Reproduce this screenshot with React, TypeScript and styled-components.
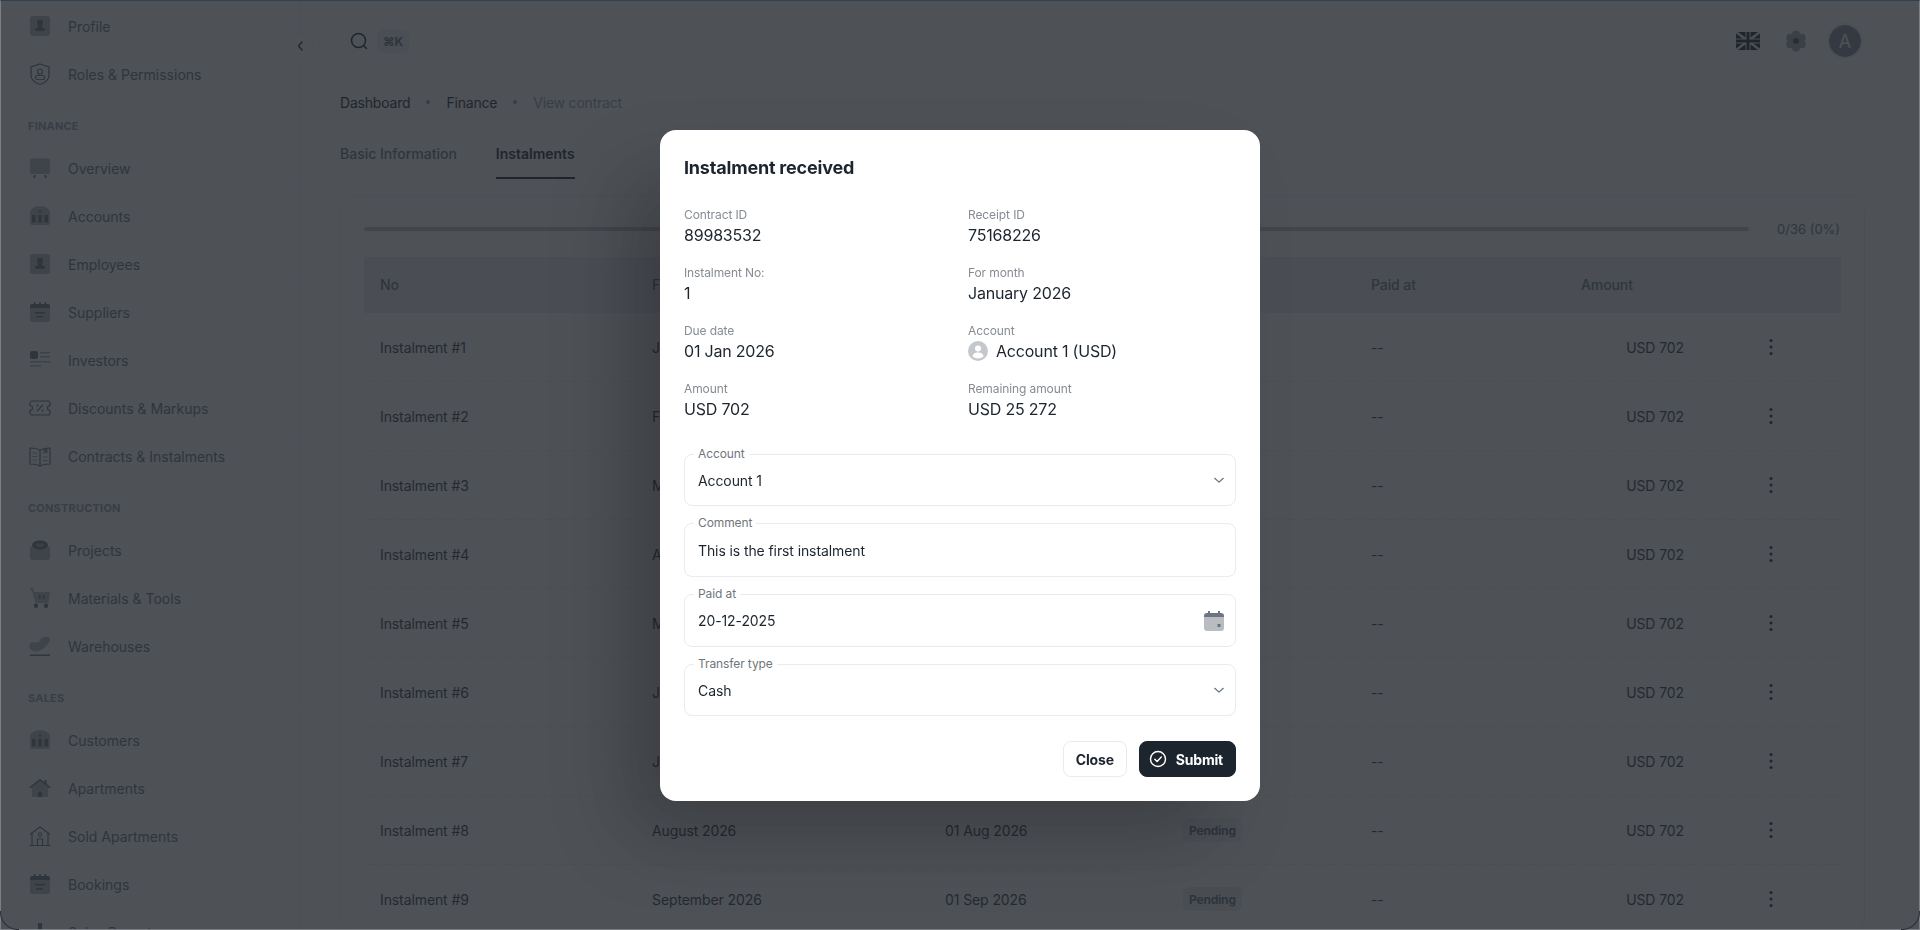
import React from 'react'
import styled, { createGlobalStyle } from 'styled-components'

const GlobalStyle = createGlobalStyle`
  * { box-sizing: border-box; }
  html, body { margin: 0; height: 100%; background: #fff; overflow: hidden; }
  body { font-family: Inter, "Liberation Sans", sans-serif; color: #1c252e; }
`

const Frame = styled.div`
  display: flex;
  width: 1920px;
  height: 930px;
  overflow: hidden;
  background: #fff;
`

const Sidebar = styled.aside`
  position: relative;
  flex: 0 0 300px;
  height: 930px;
  padding: 4px 16px 0;
  border-right: 1px dashed #eef0f2;
  overflow: visible;
`

const CollapseButton = styled.div`
  position: absolute;
  top: 33px;
  right: -14px;
  width: 26px;
  height: 26px;
  display: flex;
  align-items: center;
  justify-content: center;
  border: 1px dashed #e8eaec;
  border-radius: 50%;
  background: #fff;
  color: #1c252e;
`

const NavList = styled.div`
  display: flex;
  flex-direction: column;
  gap: 4px;
`

const NavRow = styled.div`
  display: flex;
  align-items: center;
  gap: 16px;
  height: 44px;
  padding-left: 12px;
  font-size: 14px;
  color: #637381;
`

const NavTitle = styled.div`
  height: 18px;
  line-height: 18px;
  margin: 21px 0 11px 12px;
  font-size: 11px;
  font-weight: 700;
  letter-spacing: 0.2px;
  color: #919eab;
`

const Main = styled.main`
  flex: 1;
  min-width: 0;
  padding: 25px 55px 0 40px;
`

const Topbar = styled.header`
  display: flex;
  align-items: center;
  height: 32px;
`

const SearchIcon = styled.svg`
  width: 18px;
  height: 18px;
  margin-left: 10px;
  color: #1c252e;
`

const Kbd = styled.span`
  display: flex;
  align-items: center;
  justify-content: center;
  width: 32px;
  height: 23px;
  margin-left: 9px;
  border-radius: 6px;
  background: #eef0f6;
  font-size: 12px;
  font-weight: 700;
  color: #637381;
`

const TopActions = styled.div`
  display: flex;
  align-items: center;
  margin-left: auto;
  margin-right: 4px;
`

const Avatar = styled.div`
  display: flex;
  align-items: center;
  justify-content: center;
  width: 32px;
  height: 32px;
  margin-left: 22px;
  border-radius: 50%;
  background: #7d879b;
  outline: 2px solid #f0f1f3;
  font-size: 18px;
  color: #fff;
`

const Breadcrumbs = styled.nav`
  display: flex;
  align-items: center;
  height: 22px;
  margin-top: 34px;
  font-size: 14px;
  letter-spacing: -0.2px;
`

const Crumb = styled.span<{ $muted?: boolean }>`
  color: ${p => (p.$muted ? '#919eab' : '#1c252e')};
`

const CrumbDot = styled.span`
  width: 4px;
  height: 4px;
  margin: 0 16px;
  border-radius: 50%;
  background: #919eab;
`

const Tabs = styled.div`
  display: flex;
  gap: 39px;
  margin-top: 18px;
`

const Tab = styled.div<{ $active?: boolean }>`
  height: 48px;
  line-height: 45px;
  font-size: 14px;
  font-weight: ${p => (p.$active ? 600 : 500)};
  color: ${p => (p.$active ? '#1c252e' : '#637381')};
  border-bottom: 2px solid ${p => (p.$active ? '#1c252e' : 'transparent')};
`

const Card = styled.section`
  margin-top: 16px;
  padding: 23px 23px 0;
  border: 1px solid #f0f1f3;
  border-radius: 16px;
`

const ProgressRow = styled.div`
  display: flex;
  align-items: center;
  gap: 28px;
  height: 20px;
`

const ProgressTrack = styled.div`
  flex: 1;
  height: 4px;
  border-radius: 2px;
  background: #c4c6c8;
`

const ProgressText = styled.span`
  width: 64px;
  font-size: 13px;
  white-space: nowrap;
  color: #637381;
`

const Table = styled.div`
  margin-top: 18px;
`

const tableColumns = '272px 293px 238px 188px 210px 135px 141px'

const HeadRow = styled.div`
  display: grid;
  grid-template-columns: ${tableColumns};
  align-items: center;
  height: 56px;
  padding-bottom: 1px;
  background: #eceef5;
  font-size: 14px;
  letter-spacing: -0.1px;
  font-weight: 500;
  color: #637381;
`

const BodyRow = styled.div`
  display: grid;
  grid-template-columns: ${tableColumns};
  align-items: center;
  height: 69px;
  border-bottom: 1px dashed #eceef0;
  font-size: 14px;
  letter-spacing: -0.1px;
  color: #2f3a45;
`

const Cell = styled.div<{ $right?: boolean; $center?: boolean }>`
  padding: 0 16px;
  display: flex;
  justify-content: ${p => (p.$right ? 'flex-end' : p.$center ? 'center' : 'flex-start')};
`

const Badge = styled.span`
  display: inline-flex;
  align-items: center;
  height: 24px;
  padding: 0 6px;
  border-radius: 6px;
  background: #eceef0;
  font-size: 12px;
  font-weight: 700;
  letter-spacing: -0.2px;
  color: #637381;
`

const Backdrop = styled.div`
  position: fixed;
  inset: 0;
  display: flex;
  justify-content: center;
  align-items: flex-start;
  padding-top: 130px;
  background: rgba(34, 37, 44, 0.8);
  border-top: 1px solid #33404f;
  border-left: 1px solid #7b7f84;
  border-right: 1px solid #7b7f84;
  border-bottom: 1px solid #7b7f84;

  &::before, &::after {
    content: '';
    position: absolute;
    bottom: -1px;
    width: 18px;
    height: 18px;
    border-bottom: 1px solid #2c3038;
  }
  &::before {
    left: -1px;
    border-left: 1px solid #2c3038;
    border-bottom-left-radius: 18px;
  }
  &::after {
    right: -1px;
    border-right: 1px solid #2c3038;
    border-bottom-right-radius: 18px;
  }
`

const Dialog = styled.div`
  width: 600px;
  height: 671px;
  margin-top: -1px;
  padding: 24px;
  border-radius: 16px;
  background: #fff;
  box-shadow: -40px 40px 80px -8px rgba(0, 0, 0, 0.24);
`

const DialogTitle = styled.h2`
  margin: 0 0 24px;
  font-size: 18px;
  line-height: 28px;
  font-weight: 700;
  letter-spacing: -0.2px;
  color: #1c252e;
`

const InfoGrid = styled.div`
  display: grid;
  grid-template-columns: 268px 268px;
  column-gap: 16px;
  row-gap: 18px;
`

const InfoLabel = styled.div`
  height: 18px;
  line-height: 18px;
  font-size: 12px;
  letter-spacing: -0.1px;
  color: #858c93;
`

const InfoValue = styled.div`
  display: flex;
  align-items: center;
  gap: 8px;
  height: 22px;
  line-height: 22px;
  font-size: 16px;
  letter-spacing: -0.2px;
  color: #1c252e;
`

const Fields = styled.div`
  display: flex;
  flex-direction: column;
  gap: 17px;
  margin-top: 34px;
`

const Field = styled.div<{ $height: number }>`
  position: relative;
  display: flex;
  align-items: center;
  justify-content: space-between;
  height: ${p => p.$height}px;
  padding: 0 13px;
  border: 1px solid #e9ebee;
  border-radius: 8px;
  font-size: 14px;
  letter-spacing: -0.1px;
  color: #1c252e;
`

const FieldLabel = styled.label`
  position: absolute;
  top: -9px;
  left: 9px;
  padding: 0 4px;
  background: #fff;
  font-size: 12px;
  line-height: 16px;
  letter-spacing: -0.1px;
  color: #6f767d;
`

const Actions = styled.div`
  display: flex;
  justify-content: flex-end;
  gap: 12px;
  margin-top: 25px;
`

const Button = styled.button<{ $primary?: boolean }>`
  display: flex;
  align-items: center;
  gap: 9px;
  height: 36px;
  padding: ${p => (p.$primary ? '0 12px 0 9px' : '0 12px')};
  border-radius: 8px;
  border: 1px solid ${p => (p.$primary ? '#1c252e' : '#e9ebee')};
  background: ${p => (p.$primary ? '#1c252e' : '#fff')};
  color: ${p => (p.$primary ? '#fff' : '#1c252e')};
  font-family: inherit;
  font-size: 14px;
  font-weight: 700;
  letter-spacing: -0.2px;
`

const IconSvg = styled.svg`
  flex: 0 0 24px;
  width: 24px;
  height: 24px;
  color: #637381;
`

const FieldIcon = styled.svg<{ $shift: number }>`
  margin-right: ${p => p.$shift}px;
`

const GearSvg = styled.svg`
  margin-left: 25px;
`

const UserShape = () => (
  <path d="M12 5.5a3 3 0 0 1 3 3c0 1.6-.6 3.4-1.4 4.4 1.6.4 3.4 1.2 3.4 2.6 0 1-1 1.5-2 1.5H9c-1 0-2-.5-2-1.5 0-1.4 1.8-2.2 3.4-2.6C9.600 11.900 9 10.100 9 8.500a3 3 0 0 1 3-3z" />
)

const icons: Record<string, React.ReactNode> = {
  profile: (
    <>
      <rect x="2" y="2" width="20" height="20" rx="3" opacity=".48" />
      <UserShape />
    </>
  ),
  roles: (
    <>
      <path d="M12 2l9 3v8c0 5-4.500 8-9 9.500C7.500 21 3 18 3 13V5z" fill="none" stroke="currentColor" strokeWidth="1.200" />
      <circle cx="12" cy="9.500" r="2.500" fill="none" stroke="currentColor" strokeWidth="1.200" />
      <rect x="7.500" y="13.500" width="9" height="4" rx="2" fill="none" stroke="currentColor" strokeWidth="1.200" />
    </>
  ),
  overview: (
    <>
      <rect x="2" y="2.500" width="20" height="15.500" rx="1.500" opacity=".48" />
      <path d="M5 22l1.500-3h1.500L7 22zM19 22l-1.500-3H16l1 3z" />
    </>
  ),
  bank: (
    <>
      <path d="M12 2c5 0 10 3 10 7v10a2 2 0 0 1-2 2H4a2 2 0 0 1-2-2V9c0-4 5-7 10-7z" opacity=".48" />
      <circle cx="12" cy="7.500" r="1.300" />
      <path d="M4 11h3.500v7.500H4zM10.200 11h3.600v7.500h-3.600zM16.500 11H20v7.500h-3.500z" />
    </>
  ),
  calendar: (
    <>
      <path d="M2 8h20v12a2 2 0 0 1-2 2H4a2 2 0 0 1-2-2z" opacity=".48" />
      <path d="M2 8V6a2 2 0 0 1 2-2h2V2h1.500v2h3.700V2h1.600v2h3.700V2H18v2h2a2 2 0 0 1 2 2v2z" />
      <path d="M7 12h10v1.500H7zM8 16h7v1.500H8z" />
    </>
  ),
  investors: (
    <>
      <rect x="2" y="3" width="8" height="8" rx="2" />
      <path d="M12 4h10v1.400H12zM12 8h10v1.400H12zM2 13h20v1.400H2zM2 17h11v1.400H2z" opacity=".55" />
    </>
  ),
  ticket: (
    <>
      <path d="M4 5h16a2 2 0 0 1 2 2v2.500a2.500 2.500 0 0 0 0 5V17a2 2 0 0 1-2 2H4a2 2 0 0 1-2-2v-2.500a2.500 2.500 0 0 0 0-5V7a2 2 0 0 1 2-2z" fill="none" stroke="currentColor" strokeWidth="1.200" />
      <path d="M9 15l6-6" fill="none" stroke="currentColor" strokeWidth="1.200" />
      <circle cx="9.500" cy="9.500" r="1" />
      <circle cx="14.500" cy="14.500" r="1" />
    </>
  ),
  book: (
    <>
      <path d="M12 6.500C9.500 4.500 6 4 2 4v16c4 0 7.500.5 10 2 2.500-1.500 6-2 10-2V4c-4 0-7.500.5-10 2.500zM12 6.500V22" fill="none" stroke="currentColor" strokeWidth="1.200" />
      <path d="M4.500 9H9M4.500 12.500H9M4.500 16H9M15 13H19.500M15 16.500H19.500" fill="none" stroke="currentColor" strokeWidth="1" opacity=".6" />
      <path d="M15.500 4h4v6l-2-1.500-2 1.500z" opacity=".7" />
    </>
  ),
  box: (
    <>
      <path d="M2 9h20v10a3 3 0 0 1-3 3H5a3 3 0 0 1-3-3z" opacity=".48" />
      <ellipse cx="12" cy="7" rx="8" ry="4.500" />
      <ellipse cx="12" cy="7" rx="4.500" ry="2" opacity=".35" fill="#fff" />
    </>
  ),
  cart: (
    <>
      <path d="M2 2h3l1.500 4H22l-1.500 11H7.500L3.500 3.800H2z" opacity=".48" />
      <circle cx="8" cy="19.800" r="2.200" />
      <circle cx="18" cy="19.800" r="2.200" />
      <path d="M11 9h1.500v4H11zM15 9h1.500v4H15z" />
    </>
  ),
  warehouse: (
    <>
      <path d="M2 10c1-2 4-2 5-1 1-1 3-1 4-1 1-3 5-6 9-5 3 1 2 5-1 8-2 2-5 5-8 6-2 1-7 0-9-2-1-2-1-3 0-5z" opacity=".48" />
      <path d="M2 20.500h20V22H2z" />
    </>
  ),
  house: (
    <>
      <path d="M4 11l8-6 8 6v10H4z" opacity=".48" />
      <path d="M1.500 11L12 3l4.500 3.400V4h2v4l4 3-.9 1.200L12 5 2.400 12.200z" />
      <path d="M10 21v-3.500a2 2 0 0 1 4 0V21z" />
    </>
  ),
  houseLine: (
    <>
      <path d="M2 10.500L12 3l10 7.500M4 9v12.500h16V9M1.500 21.500h21M9.500 21.500V15h5v6.500" fill="none" stroke="currentColor" strokeWidth="1.200" />
      <circle cx="12" cy="10.500" r="1.800" fill="none" stroke="currentColor" strokeWidth="1.100" />
    </>
  ),
  chart: (
    <>
      <path d="M10 3h4v18h-4z" />
    </>
  ),
}

const NavIcon = ({ name }: { name: string }) => (
  <IconSvg viewBox="0 0 24 24" fill="currentColor">
    {icons[name]}
  </IconSvg>
)

const ChevronDown = () => (
  <FieldIcon $shift={-3} width="12" height="12" viewBox="0 0 14 14" fill="none" stroke="#637381" strokeWidth="1.400" strokeLinecap="round" strokeLinejoin="round">
    <path d="M2 5l5 4.500L12 5" />
  </FieldIcon>
)

const CalendarIcon = () => (
  <FieldIcon $shift={-4} width="24" height="24" viewBox="0 0 24 24">
    <path d="M2 8h20v11a3 3 0 0 1-3 3H5a3 3 0 0 1-3-3z" fill="#b9bdc1" />
    <path d="M2 8V7a3 3 0 0 1 3-3h1V2h2v2h8V2h2v2h1a3 3 0 0 1 3 3v1z" fill="#6d7680" />
    <rect x="15.500" y="15" width="3" height="3" rx=".6" fill="#637381" />
  </FieldIcon>
)

const AccountAvatar = () => (
  <svg width="20" height="20" viewBox="0 0 20 20">
    <circle cx="10" cy="10" r="10" fill="#c4c8cc" />
    <circle cx="10" cy="7.500" r="3" fill="#fff" />
    <path d="M4.500 15.500c0-2.500 2.500-4 5.500-4s5.500 1.500 5.500 4a8.500 8.500 0 0 1-11 0z" fill="#fff" />
  </svg>
)

const CheckCircle = () => (
  <svg width="18" height="18" viewBox="0 0 18 18" fill="none" stroke="#fff" strokeWidth="1.400" strokeLinecap="round" strokeLinejoin="round">
    <circle cx="9" cy="9" r="7.500" />
    <path d="M5.800 9.200l2.300 2.300 4.200-4.500" />
  </svg>
)

const FlagIcon = () => (
  <svg width="24" height="18" viewBox="0 0 24 18">
    <rect width="24" height="18" rx="1.500" fill="#1c252e" />
    <path d="M0 0l24 18M24 0L0 18" stroke="#f4f6f8" strokeWidth="2.400" />
    <path d="M12 0v18M0 9h24" stroke="#f4f6f8" strokeWidth="5" />
    <path d="M12 0v18M0 9h24" stroke="#1c252e" strokeWidth="3" />
  </svg>
)

const GearIcon = () => (
  <GearSvg width="22" height="22" viewBox="0 0 22 22">
    <g fill="#637381" opacity=".62">
      <circle cx="11" cy="4.500" r="4" />
      <circle cx="11" cy="17.500" r="4" />
      <circle cx="5.300" cy="7.700" r="4" />
      <circle cx="16.700" cy="7.700" r="4" />
      <circle cx="5.300" cy="14.300" r="4" />
      <circle cx="16.700" cy="14.300" r="4" />
    </g>
    <circle cx="11" cy="11" r="3" fill="#1c252e" opacity=".8" />
  </GearSvg>
)

const DotsIcon = () => (
  <svg width="4" height="18" viewBox="0 0 4 18" fill="#1c252e">
    <circle cx="2" cy="2.500" r="1.500" />
    <circle cx="2" cy="9" r="1.500" />
    <circle cx="2" cy="15.500" r="1.500" />
  </svg>
)

type NavEntry = { label: string; icon: string }

const navGroups: { title?: string; items: NavEntry[] }[] = [
  { items: [{ label: 'Profile', icon: 'profile' }, { label: 'Roles & Permissions', icon: 'roles' }] },
  {
    title: 'FINANCE',
    items: [
      { label: 'Overview', icon: 'overview' },
      { label: 'Accounts', icon: 'bank' },
      { label: 'Employees', icon: 'profile' },
      { label: 'Suppliers', icon: 'calendar' },
      { label: 'Investors', icon: 'investors' },
      { label: 'Discounts & Markups', icon: 'ticket' },
      { label: 'Contracts & Instalments', icon: 'book' },
    ],
  },
  {
    title: 'CONSTRUCTION',
    items: [
      { label: 'Projects', icon: 'box' },
      { label: 'Materials & Tools', icon: 'cart' },
      { label: 'Warehouses', icon: 'warehouse' },
    ],
  },
  {
    title: 'SALES',
    items: [
      { label: 'Customers', icon: 'bank' },
      { label: 'Apartments', icon: 'house' },
      { label: 'Sold Apartments', icon: 'houseLine' },
      { label: 'Bookings', icon: 'calendar' },
      { label: 'Sales Reports', icon: 'chart' },
    ],
  },
]

const instalments = [
  ['January 2026', '01 Jan 2026'],
  ['February 2026', '01 Feb 2026'],
  ['March 2026', '01 Mar 2026'],
  ['April 2026', '01 Apr 2026'],
  ['May 2026', '01 May 2026'],
  ['June 2026', '01 Jun 2026'],
  ['July 2026', '01 Jul 2026'],
  ['August 2026', '01 Aug 2026'],
  ['September 2026', '01 Sep 2026'],
]

const infoItems: [string, string][] = [
  ['Contract ID', '89983532'],
  ['Receipt ID', '75168226'],
  ['Instalment No:', '1'],
  ['For month', 'January 2026'],
  ['Due date', '01 Jan 2026'],
  ['Account', 'Account 1 (USD)'],
  ['Amount', 'USD 702'],
  ['Remaining amount', 'USD 25 272'],
]

export default function App() {
  return (
    <Frame>
      <GlobalStyle />
      <Sidebar>
        <CollapseButton>
          <svg width="12" height="12" viewBox="0 0 12 12" fill="none" stroke="currentColor" strokeWidth="1.300" strokeLinecap="round" strokeLinejoin="round">
            <path d="M8 2L4.500 6l3.500 4" />
          </svg>
        </CollapseButton>
        {navGroups.map((group, i) => (
          <div key={i}>
            {group.title && <NavTitle>{group.title}</NavTitle>}
            <NavList>
              {group.items.map(item => (
                <NavRow key={item.label}>
                  <NavIcon name={item.icon} />
                  {item.label}
                </NavRow>
              ))}
            </NavList>
          </div>
        ))}
      </Sidebar>
      <Main>
        <Topbar>
          <SearchIcon viewBox="0 0 18 18" fill="none" stroke="currentColor" strokeWidth="1.500" strokeLinecap="round">
            <circle cx="8.500" cy="8.500" r="7" />
            <path d="M13.800 13.800L16.500 16.500" />
          </SearchIcon>
          <Kbd>⌘K</Kbd>
          <TopActions>
            <FlagIcon />
            <GearIcon />
            <Avatar>A</Avatar>
          </TopActions>
        </Topbar>
        <Breadcrumbs>
          <Crumb>Dashboard</Crumb>
          <CrumbDot />
          <Crumb>Finance</Crumb>
          <CrumbDot />
          <Crumb $muted>View contract</Crumb>
        </Breadcrumbs>
        <Tabs>
          <Tab>Basic Information</Tab>
          <Tab $active>Instalments</Tab>
        </Tabs>
        <Card>
          <ProgressRow>
            <ProgressTrack />
            <ProgressText>0/36 (0%)</ProgressText>
          </ProgressRow>
          <Table>
            <HeadRow>
              <Cell>No</Cell>
              <Cell>For month</Cell>
              <Cell>Due date</Cell>
              <Cell>Status</Cell>
              <Cell>Paid at</Cell>
              <Cell>Amount</Cell>
              <Cell />
            </HeadRow>
            {instalments.map(([month, due], i) => (
              <BodyRow key={month}>
                <Cell>Instalment #{i + 1}</Cell>
                <Cell>{month}</Cell>
                <Cell>{due}</Cell>
                <Cell><Badge>Pending</Badge></Cell>
                <Cell>--</Cell>
                <Cell $right>USD 702</Cell>
                <Cell $center><DotsIcon /></Cell>
              </BodyRow>
            ))}
          </Table>
        </Card>
      </Main>
      <Backdrop>
        <Dialog>
          <DialogTitle>Instalment received</DialogTitle>
          <InfoGrid>
            {infoItems.map(([label, value]) => (
              <div key={label}>
                <InfoLabel>{label}</InfoLabel>
                <InfoValue>
                  {label === 'Account' && <AccountAvatar />}
                  {value}
                </InfoValue>
              </div>
            ))}
          </InfoGrid>
          <Fields>
            <Field $height={52}>
              <FieldLabel>Account</FieldLabel>
              Account 1
              <ChevronDown />
            </Field>
            <Field $height={54}>
              <FieldLabel>Comment</FieldLabel>
              This is the first instalment
            </Field>
            <Field $height={53}>
              <FieldLabel>Paid at</FieldLabel>
              20-12-2025
              <CalendarIcon />
            </Field>
            <Field $height={52}>
              <FieldLabel>Transfer type</FieldLabel>
              Cash
              <ChevronDown />
            </Field>
          </Fields>
          <Actions>
            <Button>Close</Button>
            <Button $primary><CheckCircle />Submit</Button>
          </Actions>
        </Dialog>
      </Backdrop>
    </Frame>
  )
}
